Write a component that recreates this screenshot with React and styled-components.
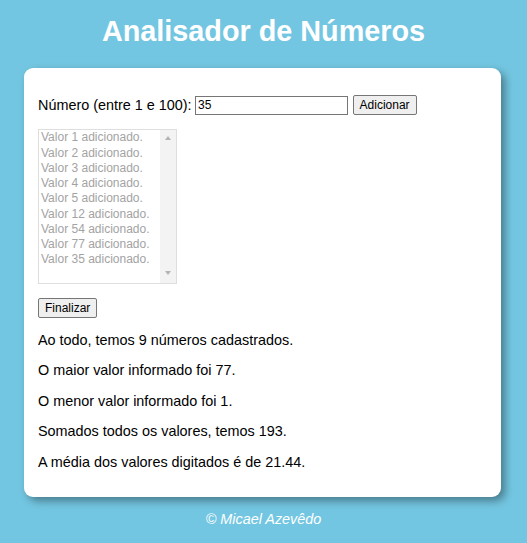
import React from "react";
import styled, { createGlobalStyle } from "styled-components";

const GlobalStyle = createGlobalStyle`
  body {
    margin: 0;
    background: #73c6e1;
    font-family: "Liberation Sans", Arial, sans-serif;
  }
`;

const Header = styled.header`
  color: white;
  text-align: center;
`;

const Title = styled.h1`
  margin: 15px 0 20px;
  font-size: 28.8px;
  font-weight: bold;
  line-height: 33px;
`;

const Card = styled.section`
  width: 477px;
  box-sizing: border-box;
  margin: 0 26px 0 24px;
  padding: 13px 14px;
  background: white;
  border-radius: 9px;
  box-shadow: 4px 4px 8px rgba(0, 0, 0, 0.38);
`;

const Row = styled.div`
  display: flex;
  align-items: center;
  margin: 14.4px 0;
  font-size: 14.4px;
  color: #000;
`;

const Label = styled.span`
  margin-right: 3.5px;
`;

const TextInput = styled.div`
  width: 153px;
  height: 19px;
  box-sizing: border-box;
  border: 1px solid #767676;
  padding: 0 2px;
  font-size: 12px;
  line-height: 17px;
`;

const Button = styled.button`
  height: 19.5px;
  box-sizing: border-box;
  margin: ${p => (p.$inline ? "0 0 0 4.5px" : "0")};
  padding: 0 6px;
  border: 1px solid #767676;
  border-radius: 2px;
  background: #efefef;
  font-family: "Liberation Sans", Arial, sans-serif;
  font-size: 12px;
  color: #000;
`;

const ListBox = styled.div`
  display: flex;
  width: 139px;
  height: 154.5px;
  box-sizing: border-box;
  margin: 14.4px 0;
  border: 1px solid #dedede;
  background: white;
`;

const Options = styled.div`
  flex: 1;
  padding: 0 2px;
  font-size: 12px;
  line-height: 15.25px;
  color: #a3a3a3;
`;

const Track = styled.div`
  width: 16px;
  background: #f3f3f3;
  display: flex;
  flex-direction: column;
  justify-content: space-between;
  align-items: center;
  padding: 6px 0 8px;
`;

const Arrow = styled.div`
  width: 0;
  height: 0;
  border-left: 3.5px solid transparent;
  border-right: 3.5px solid transparent;
  ${p =>
    p.$down
      ? "border-top: 4px solid #b4b4b4;"
      : "border-bottom: 4px solid #b4b4b4;"}
`;

const Result = styled.p`
  margin: 14.4px 0;
  font-size: 14.4px;
  line-height: 16px;
  color: #000;
`;

const Footer = styled.footer`
  text-align: center;
  color: white;
  font-style: italic;
  font-size: 14.4px;
  margin: 14.4px 0;
`;

const values = [1, 2, 3, 4, 5, 12, 54, 77, 35];

export default function App() {
  const total = values.reduce((a, b) => a + b, 0);
  return (
    <>
      <GlobalStyle />
      <Header>
        <Title>Analisador de Números</Title>
      </Header>
      <Card>
        <Row>
          <Label>Número (entre 1 e 100):</Label>
          <TextInput>35</TextInput>
          <Button $inline>Adicionar</Button>
        </Row>
        <ListBox>
          <Options>
            {values.map(v => (
              <div key={v}>Valor {v} adicionado.</div>
            ))}
          </Options>
          <Track>
            <Arrow />
            <Arrow $down />
          </Track>
        </ListBox>
        <Row>
          <Button>Finalizar</Button>
        </Row>
        <Result>Ao todo, temos {values.length} números cadastrados.</Result>
        <Result>O maior valor informado foi {Math.max(...values)}.</Result>
        <Result>O menor valor informado foi {Math.min(...values)}.</Result>
        <Result>Somados todos os valores, temos {total}.</Result>
        <Result>A média dos valores digitados é de {(total / values.length).toFixed(2)}.</Result>
      </Card>
      <Footer>© Micael Azevêdo</Footer>
    </>
  );
}
